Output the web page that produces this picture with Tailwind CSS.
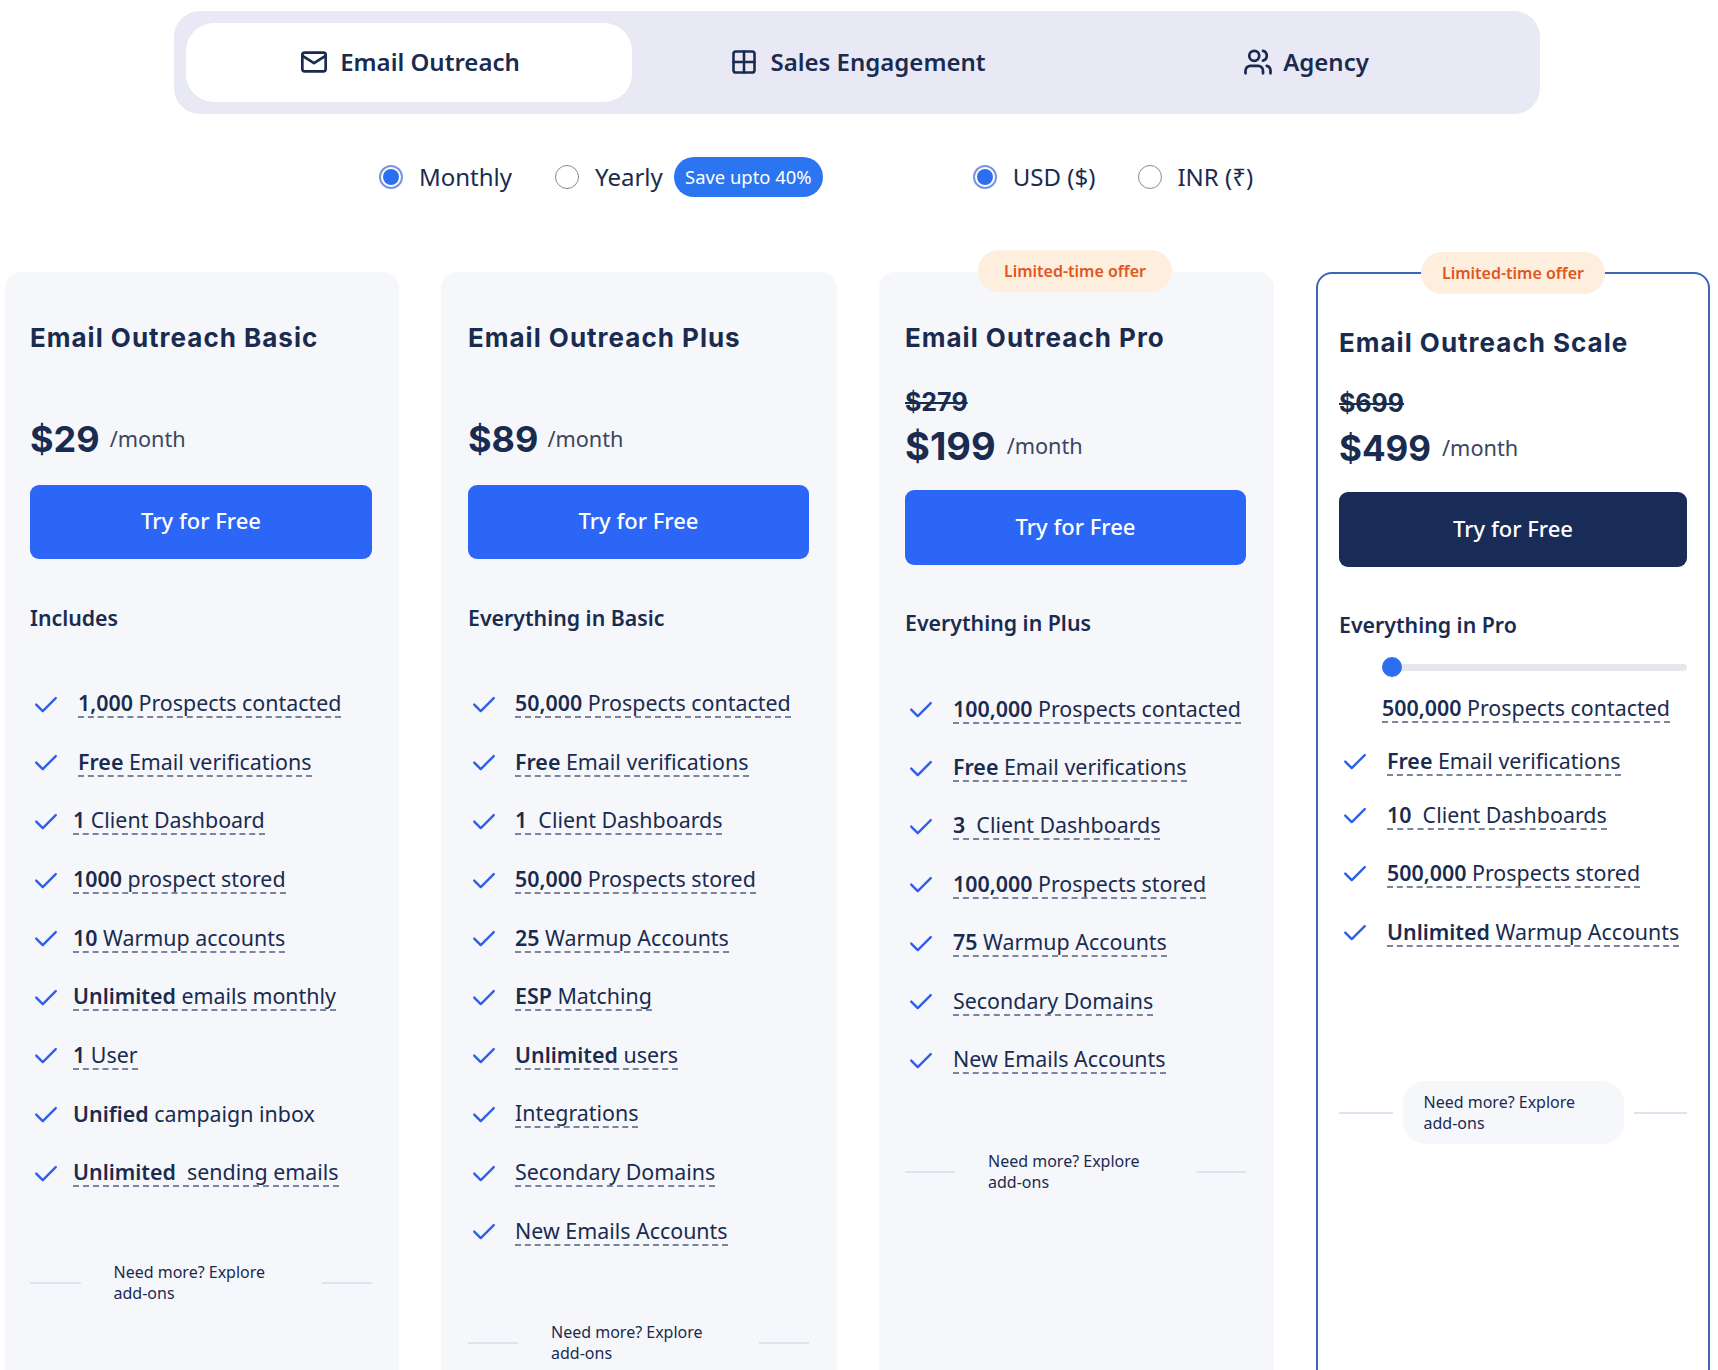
<!DOCTYPE html>
<html lang="en">
<head>
  <meta charset="UTF-8">
  <title>Pricing</title>
  <meta name="viewport" content="width=device-width, initial-scale=1.0">
  <script src="https://cdn.jsdelivr.net/npm/@tailwindcss/browser@4"></script>
</head>
<body class="bg-white text-[#1a2b50] font-['Noto_Sans',sans-serif] h-[1370px] overflow-hidden">

  <!-- PRODUCT TABS -->
  <div class="ml-[174px] mt-[11px] w-[1366px] h-[103px] p-3 rounded-[26px] bg-[#e8e9f5] flex">
    <div class="flex-1 h-[79px] pb-[2px] pl-[2px] rounded-[28px] bg-white flex items-center justify-center gap-[12px] text-[24px] font-semibold">
      <svg class="w-[28px] h-[28px]" viewBox="0 0 24 24" fill="none" stroke="currentColor" stroke-width="2.3" stroke-linecap="round" stroke-linejoin="round"><rect x="2" y="4" width="20" height="16" rx="2"/><path d="M2.5 7 12 13l9.5-6"/></svg>
      <span>Email Outreach</span>
    </div>
    <div class="flex-1 h-[79px] pb-[2px] pl-[4px] flex items-center justify-center gap-[12px] text-[24px] font-semibold">
      <svg class="w-[28px] h-[28px]" viewBox="0 0 24 24" fill="none" stroke="currentColor" stroke-width="2.2" stroke-linecap="round" stroke-linejoin="round"><rect x="3" y="3" width="18" height="18" rx="2"/><path d="M12 3v18M3 12h18"/></svg>
      <span>Sales Engagement</span>
    </div>
    <div class="flex-1 h-[79px] pb-[2px] pl-[4px] flex items-center justify-center gap-[10px] text-[24px] font-semibold">
      <svg class="w-[30px] h-[30px]" viewBox="0 0 24 24" fill="none" stroke="currentColor" stroke-width="2.2" stroke-linecap="round" stroke-linejoin="round"><path d="M16 21v-2a4 4 0 0 0-4-4H6a4 4 0 0 0-4 4v2"/><circle cx="9" cy="7" r="4"/><path d="M22 21v-2a4 4 0 0 0-3-3.87"/><path d="M16 3.13a4 4 0 0 1 0 7.75"/></svg>
      <span>Agency</span>
    </div>
  </div>

  <!-- BILLING / CURRENCY -->
  <div class="mt-[43px] ml-[379px] h-[40px] flex items-center text-[24px]">
    <span class="w-6 h-6 rounded-full border-2 border-[#7d93dd] flex items-center justify-center"><span class="w-4 h-4 rounded-full bg-[#2b6ff0]"></span></span>
    <span class="ml-[16px]">Monthly</span>
    <span class="ml-[43px] w-6 h-6 rounded-full border-[1.5px] border-[#8a8a8a] bg-white"></span>
    <span class="ml-[16px]">Yearly</span>
    <span class="ml-[11px] w-[149px] h-[40px] pb-[1px] rounded-full bg-[#2b76f0] text-white text-[18.4px] flex items-center justify-center">Save upto 40%</span>
    <span class="ml-[150px] w-6 h-6 rounded-full border-2 border-[#7d93dd] flex items-center justify-center"><span class="w-4 h-4 rounded-full bg-[#2b6ff0]"></span></span>
    <span class="ml-[16px]">USD ($)</span>
    <span class="ml-[43px] w-6 h-6 rounded-full border-[1.5px] border-[#8a8a8a] bg-white"></span>
    <span class="ml-[15px]">INR (₹)</span>
  </div>

  <!-- PLANS -->
  <div class="mt-[75px] pl-[5px] grid grid-cols-[394px_396px_395px_394px] gap-x-[42px] items-start">

    <!-- Basic -->
    <div class="relative h-[1200px] rounded-[16px] bg-[#f6f7fb] pt-[48px] pl-[25px] pr-[27px]">
      <h2 class="h-[36px] leading-[36px] text-[26px] font-bold tracking-[1px] font-['Inter',sans-serif]">Email Outreach Basic</h2>
      <div class="mt-[59px] h-[48px] flex items-center">
        <span class="text-[36px] font-bold font-['Inter',sans-serif]">$29</span>
        <span class="ml-[10px] text-[21.7px] text-[#3a4660]">/month</span>
      </div>
      <button class="mt-[22px] w-full h-[74px] pb-[3px] rounded-[9px] bg-[#2b66f6] text-white text-[22px] font-medium">Try for Free</button>
      <p class="mt-[44px] h-[30px] leading-[30px] text-[21.3px] font-semibold">Includes</p>
      <ul class="mt-[41.5px] text-[21.4px]">
        <li class="h-[58.6px] flex items-center"><svg class="ml-[3px] w-[26px] h-[26px] text-[#2f5fe8]" viewBox="0 0 24 24" fill="none" stroke="currentColor" stroke-width="2.2" stroke-linecap="round" stroke-linejoin="round"><path d="M3 12.5l6 6L21 6.5"/></svg><span class="ml-[19px] border-b-2 border-dashed border-[#7a849c] leading-[27px]"><b class="font-semibold">1,000 </b>Prospects contacted</span></li>
        <li class="h-[58.6px] flex items-center"><svg class="ml-[3px] w-[26px] h-[26px] text-[#2f5fe8]" viewBox="0 0 24 24" fill="none" stroke="currentColor" stroke-width="2.2" stroke-linecap="round" stroke-linejoin="round"><path d="M3 12.5l6 6L21 6.5"/></svg><span class="ml-[19px] border-b-2 border-dashed border-[#7a849c] leading-[27px]"><b class="font-semibold">Free </b>Email verifications</span></li>
        <li class="h-[58.6px] flex items-center"><svg class="ml-[3px] w-[26px] h-[26px] text-[#2f5fe8]" viewBox="0 0 24 24" fill="none" stroke="currentColor" stroke-width="2.2" stroke-linecap="round" stroke-linejoin="round"><path d="M3 12.5l6 6L21 6.5"/></svg><span class="ml-[14px] border-b-2 border-dashed border-[#7a849c] leading-[27px]"><b class="font-semibold">1 </b>Client Dashboard</span></li>
        <li class="h-[58.6px] flex items-center"><svg class="ml-[3px] w-[26px] h-[26px] text-[#2f5fe8]" viewBox="0 0 24 24" fill="none" stroke="currentColor" stroke-width="2.2" stroke-linecap="round" stroke-linejoin="round"><path d="M3 12.5l6 6L21 6.5"/></svg><span class="ml-[14px] border-b-2 border-dashed border-[#7a849c] leading-[27px]"><b class="font-semibold">1000 </b>prospect stored</span></li>
        <li class="h-[58.6px] flex items-center"><svg class="ml-[3px] w-[26px] h-[26px] text-[#2f5fe8]" viewBox="0 0 24 24" fill="none" stroke="currentColor" stroke-width="2.2" stroke-linecap="round" stroke-linejoin="round"><path d="M3 12.5l6 6L21 6.5"/></svg><span class="ml-[14px] border-b-2 border-dashed border-[#7a849c] leading-[27px]"><b class="font-semibold">10 </b>Warmup accounts</span></li>
        <li class="h-[58.6px] flex items-center"><svg class="ml-[3px] w-[26px] h-[26px] text-[#2f5fe8]" viewBox="0 0 24 24" fill="none" stroke="currentColor" stroke-width="2.2" stroke-linecap="round" stroke-linejoin="round"><path d="M3 12.5l6 6L21 6.5"/></svg><span class="ml-[14px] border-b-2 border-dashed border-[#7a849c] leading-[27px]"><b class="font-semibold">Unlimited </b>emails monthly</span></li>
        <li class="h-[58.6px] flex items-center"><svg class="ml-[3px] w-[26px] h-[26px] text-[#2f5fe8]" viewBox="0 0 24 24" fill="none" stroke="currentColor" stroke-width="2.2" stroke-linecap="round" stroke-linejoin="round"><path d="M3 12.5l6 6L21 6.5"/></svg><span class="ml-[14px] border-b-2 border-dashed border-[#7a849c] leading-[27px]"><b class="font-semibold">1 </b>User</span></li>
        <li class="h-[58.6px] flex items-center"><svg class="ml-[3px] w-[26px] h-[26px] text-[#2f5fe8]" viewBox="0 0 24 24" fill="none" stroke="currentColor" stroke-width="2.2" stroke-linecap="round" stroke-linejoin="round"><path d="M3 12.5l6 6L21 6.5"/></svg><span class="ml-[14px] leading-[27px]"><b class="font-semibold">Unified </b>campaign inbox</span></li>
        <li class="h-[58.6px] flex items-center"><svg class="ml-[3px] w-[26px] h-[26px] text-[#2f5fe8]" viewBox="0 0 24 24" fill="none" stroke="currentColor" stroke-width="2.2" stroke-linecap="round" stroke-linejoin="round"><path d="M3 12.5l6 6L21 6.5"/></svg><span class="ml-[14px] border-b-2 border-dashed border-[#7a849c] leading-[27px] whitespace-pre"><b class="font-semibold">Unlimited </b> sending emails</span></li>
      </ul>
      <div class="mt-[50px] flex items-center">
        <span class="flex-1 h-[2px] bg-[#e0e2f0]"></span>
        <span class="mx-[10px] w-[221px] h-[63px] px-[23px] flex items-center text-[16px] leading-[21px]">Need more? Explore add-ons</span>
        <span class="flex-1 h-[2px] bg-[#e0e2f0]"></span>
      </div>
    </div>

    <!-- Plus -->
    <div class="relative h-[1200px] rounded-[16px] bg-[#f6f7fb] pt-[48px] pl-[27px] pr-[28px]">
      <h2 class="h-[36px] leading-[36px] text-[26px] font-bold tracking-[1px] font-['Inter',sans-serif]">Email Outreach Plus</h2>
      <div class="mt-[59px] h-[48px] flex items-center">
        <span class="text-[36px] font-bold font-['Inter',sans-serif]">$89</span>
        <span class="ml-[9px] text-[21.7px] text-[#3a4660]">/month</span>
      </div>
      <button class="mt-[22px] w-full h-[74px] pb-[3px] rounded-[9px] bg-[#2b66f6] text-white text-[22px] font-medium">Try for Free</button>
      <p class="mt-[44px] h-[30px] leading-[30px] text-[21.3px] font-semibold">Everything in Basic</p>
      <ul class="mt-[41.5px] text-[21.4px]">
        <li class="h-[58.6px] flex items-center"><svg class="ml-[3px] w-[26px] h-[26px] text-[#2f5fe8]" viewBox="0 0 24 24" fill="none" stroke="currentColor" stroke-width="2.2" stroke-linecap="round" stroke-linejoin="round"><path d="M3 12.5l6 6L21 6.5"/></svg><span class="ml-[18px] border-b-2 border-dashed border-[#7a849c] leading-[27px]"><b class="font-semibold">50,000 </b>Prospects contacted</span></li>
        <li class="h-[58.6px] flex items-center"><svg class="ml-[3px] w-[26px] h-[26px] text-[#2f5fe8]" viewBox="0 0 24 24" fill="none" stroke="currentColor" stroke-width="2.2" stroke-linecap="round" stroke-linejoin="round"><path d="M3 12.5l6 6L21 6.5"/></svg><span class="ml-[18px] border-b-2 border-dashed border-[#7a849c] leading-[27px]"><b class="font-semibold">Free </b>Email verifications</span></li>
        <li class="h-[58.6px] flex items-center"><svg class="ml-[3px] w-[26px] h-[26px] text-[#2f5fe8]" viewBox="0 0 24 24" fill="none" stroke="currentColor" stroke-width="2.2" stroke-linecap="round" stroke-linejoin="round"><path d="M3 12.5l6 6L21 6.5"/></svg><span class="ml-[18px] border-b-2 border-dashed border-[#7a849c] leading-[27px] whitespace-pre"><b class="font-semibold">1 </b> Client Dashboards</span></li>
        <li class="h-[58.6px] flex items-center"><svg class="ml-[3px] w-[26px] h-[26px] text-[#2f5fe8]" viewBox="0 0 24 24" fill="none" stroke="currentColor" stroke-width="2.2" stroke-linecap="round" stroke-linejoin="round"><path d="M3 12.5l6 6L21 6.5"/></svg><span class="ml-[18px] border-b-2 border-dashed border-[#7a849c] leading-[27px]"><b class="font-semibold">50,000 </b>Prospects stored</span></li>
        <li class="h-[58.6px] flex items-center"><svg class="ml-[3px] w-[26px] h-[26px] text-[#2f5fe8]" viewBox="0 0 24 24" fill="none" stroke="currentColor" stroke-width="2.2" stroke-linecap="round" stroke-linejoin="round"><path d="M3 12.5l6 6L21 6.5"/></svg><span class="ml-[18px] border-b-2 border-dashed border-[#7a849c] leading-[27px]"><b class="font-semibold">25 </b>Warmup Accounts</span></li>
        <li class="h-[58.6px] flex items-center"><svg class="ml-[3px] w-[26px] h-[26px] text-[#2f5fe8]" viewBox="0 0 24 24" fill="none" stroke="currentColor" stroke-width="2.2" stroke-linecap="round" stroke-linejoin="round"><path d="M3 12.5l6 6L21 6.5"/></svg><span class="ml-[18px] border-b-2 border-dashed border-[#7a849c] leading-[27px]"><b class="font-semibold">ESP </b>Matching</span></li>
        <li class="h-[58.6px] flex items-center"><svg class="ml-[3px] w-[26px] h-[26px] text-[#2f5fe8]" viewBox="0 0 24 24" fill="none" stroke="currentColor" stroke-width="2.2" stroke-linecap="round" stroke-linejoin="round"><path d="M3 12.5l6 6L21 6.5"/></svg><span class="ml-[18px] border-b-2 border-dashed border-[#7a849c] leading-[27px]"><b class="font-semibold">Unlimited </b>users</span></li>
        <li class="h-[58.6px] flex items-center"><svg class="ml-[3px] w-[26px] h-[26px] text-[#2f5fe8]" viewBox="0 0 24 24" fill="none" stroke="currentColor" stroke-width="2.2" stroke-linecap="round" stroke-linejoin="round"><path d="M3 12.5l6 6L21 6.5"/></svg><span class="ml-[18px] border-b-2 border-dashed border-[#7a849c] leading-[27px]">Integrations</span></li>
        <li class="h-[58.6px] flex items-center"><svg class="ml-[3px] w-[26px] h-[26px] text-[#2f5fe8]" viewBox="0 0 24 24" fill="none" stroke="currentColor" stroke-width="2.2" stroke-linecap="round" stroke-linejoin="round"><path d="M3 12.5l6 6L21 6.5"/></svg><span class="ml-[18px] border-b-2 border-dashed border-[#7a849c] leading-[27px]">Secondary Domains</span></li>
        <li class="h-[58.6px] flex items-center"><svg class="ml-[3px] w-[26px] h-[26px] text-[#2f5fe8]" viewBox="0 0 24 24" fill="none" stroke="currentColor" stroke-width="2.2" stroke-linecap="round" stroke-linejoin="round"><path d="M3 12.5l6 6L21 6.5"/></svg><span class="ml-[18px] border-b-2 border-dashed border-[#7a849c] leading-[27px]">New Emails Accounts</span></li>
      </ul>
      <div class="mt-[51.5px] flex items-center">
        <span class="flex-1 h-[2px] bg-[#e0e2f0]"></span>
        <span class="mx-[10px] w-[221px] h-[63px] px-[23px] flex items-center text-[16px] leading-[21px]">Need more? Explore add-ons</span>
        <span class="flex-1 h-[2px] bg-[#e0e2f0]"></span>
      </div>
    </div>

    <!-- Pro -->
    <div class="relative h-[1200px] rounded-[16px] bg-[#f6f7fb] pt-[48px] pl-[26px] pr-[28px]">
      <span class="absolute -top-[22px] left-[99px] w-[194px] h-[42px] rounded-full bg-[#fdeedd] text-[#e0561f] text-[16px] font-semibold flex items-center justify-center">Limited-time offer</span>
      <h2 class="h-[36px] leading-[36px] text-[26px] font-bold tracking-[1px] font-['Inter',sans-serif]">Email Outreach Pro</h2>
      <div class="mt-[32px] h-[28px] leading-[28px] text-[25px] font-bold font-['Inter',sans-serif] line-through">$279</div>
      <div class="mt-[6px] h-[48px] flex items-center">
        <span class="text-[38px] font-bold font-['Inter',sans-serif]">$199</span>
        <span class="ml-[11px] text-[21.7px] text-[#3a4660]">/month</span>
      </div>
      <button class="mt-[20px] w-full h-[75px] pb-[2px] rounded-[9px] bg-[#2b66f6] text-white text-[22px] font-medium">Try for Free</button>
      <p class="mt-[43px] h-[30px] leading-[30px] text-[21.3px] font-semibold">Everything in Plus</p>
      <ul class="mt-[42px] text-[21.4px]">
        <li class="h-[58.4px] flex items-center"><svg class="ml-[3px] w-[26px] h-[26px] text-[#2f5fe8]" viewBox="0 0 24 24" fill="none" stroke="currentColor" stroke-width="2.2" stroke-linecap="round" stroke-linejoin="round"><path d="M3 12.5l6 6L21 6.5"/></svg><span class="ml-[19px] border-b-2 border-dashed border-[#7a849c] leading-[27px]"><b class="font-semibold">100,000 </b>Prospects contacted</span></li>
        <li class="h-[58.4px] flex items-center"><svg class="ml-[3px] w-[26px] h-[26px] text-[#2f5fe8]" viewBox="0 0 24 24" fill="none" stroke="currentColor" stroke-width="2.2" stroke-linecap="round" stroke-linejoin="round"><path d="M3 12.5l6 6L21 6.5"/></svg><span class="ml-[19px] border-b-2 border-dashed border-[#7a849c] leading-[27px]"><b class="font-semibold">Free </b>Email verifications</span></li>
        <li class="h-[58.4px] flex items-center"><svg class="ml-[3px] w-[26px] h-[26px] text-[#2f5fe8]" viewBox="0 0 24 24" fill="none" stroke="currentColor" stroke-width="2.2" stroke-linecap="round" stroke-linejoin="round"><path d="M3 12.5l6 6L21 6.5"/></svg><span class="ml-[19px] border-b-2 border-dashed border-[#7a849c] leading-[27px] whitespace-pre"><b class="font-semibold">3 </b> Client Dashboards</span></li>
        <li class="h-[58.4px] flex items-center"><svg class="ml-[3px] w-[26px] h-[26px] text-[#2f5fe8]" viewBox="0 0 24 24" fill="none" stroke="currentColor" stroke-width="2.2" stroke-linecap="round" stroke-linejoin="round"><path d="M3 12.5l6 6L21 6.5"/></svg><span class="ml-[19px] border-b-2 border-dashed border-[#7a849c] leading-[27px]"><b class="font-semibold">100,000 </b>Prospects stored</span></li>
        <li class="h-[58.4px] flex items-center"><svg class="ml-[3px] w-[26px] h-[26px] text-[#2f5fe8]" viewBox="0 0 24 24" fill="none" stroke="currentColor" stroke-width="2.2" stroke-linecap="round" stroke-linejoin="round"><path d="M3 12.5l6 6L21 6.5"/></svg><span class="ml-[19px] border-b-2 border-dashed border-[#7a849c] leading-[27px]"><b class="font-semibold">75 </b>Warmup Accounts</span></li>
        <li class="h-[58.4px] flex items-center"><svg class="ml-[3px] w-[26px] h-[26px] text-[#2f5fe8]" viewBox="0 0 24 24" fill="none" stroke="currentColor" stroke-width="2.2" stroke-linecap="round" stroke-linejoin="round"><path d="M3 12.5l6 6L21 6.5"/></svg><span class="ml-[19px] border-b-2 border-dashed border-[#7a849c] leading-[27px]">Secondary Domains</span></li>
        <li class="h-[58.4px] flex items-center"><svg class="ml-[3px] w-[26px] h-[26px] text-[#2f5fe8]" viewBox="0 0 24 24" fill="none" stroke="currentColor" stroke-width="2.2" stroke-linecap="round" stroke-linejoin="round"><path d="M3 12.5l6 6L21 6.5"/></svg><span class="ml-[19px] border-b-2 border-dashed border-[#7a849c] leading-[27px]">New Emails Accounts</span></li>
      </ul>
      <div class="mt-[52px] flex items-center">
        <span class="flex-1 h-[2px] bg-[#e0e2f0]"></span>
        <span class="mx-[10px] w-[221px] h-[63px] px-[23px] flex items-center text-[16px] leading-[21px]">Need more? Explore add-ons</span>
        <span class="flex-1 h-[2px] bg-[#e0e2f0]"></span>
      </div>
    </div>

    <!-- Scale -->
    <div class="relative h-[1200px] rounded-[16px] border-2 border-[#3e64b8] bg-white pt-[51px] pl-[21px] pr-[21px]">
      <span class="absolute -top-[22px] left-[103px] w-[184px] h-[42px] rounded-full bg-[#fdeedd] text-[#e0561f] text-[16px] font-semibold flex items-center justify-center">Limited-time offer</span>
      <h2 class="h-[36px] leading-[36px] text-[26px] font-bold tracking-[1px] font-['Inter',sans-serif]">Email Outreach Scale</h2>
      <div class="mt-[28px] h-[28px] leading-[28px] text-[25px] font-bold font-['Inter',sans-serif] line-through">$699</div>
      <div class="mt-[7px] h-[48px] flex items-center">
        <span class="text-[35px] font-bold font-['Inter',sans-serif]">$499</span>
        <span class="ml-[11px] text-[21.7px] text-[#3a4660]">/month</span>
      </div>
      <button class="mt-[20px] w-full h-[75px] pb-[2px] rounded-[9px] bg-[#182c57] text-white text-[22px] font-medium">Try for Free</button>
      <p class="mt-[43px] h-[30px] leading-[30px] text-[21.3px] font-semibold">Everything in Pro</p>
      <div class="mt-[17px] ml-[43px] h-[20px] relative flex items-center">
        <span class="w-full h-[7px] rounded-full bg-[#e6e7ee]"></span>
        <span class="absolute left-0 w-[20px] h-[20px] rounded-full bg-[#2b6ff0]"></span>
      </div>
      <div class="mt-[2px] ml-[43px] h-[58px] flex items-center text-[21.4px]"><span class="border-b-2 border-dashed border-[#7a849c] leading-[27px]"><b class="font-semibold">500,000 </b>Prospects contacted</span></div>
      <ul class="text-[21.4px]">
        <li class="h-[48px] flex items-center"><svg class="ml-[3px] w-[26px] h-[26px] text-[#2f5fe8]" viewBox="0 0 24 24" fill="none" stroke="currentColor" stroke-width="2.2" stroke-linecap="round" stroke-linejoin="round"><path d="M3 12.5l6 6L21 6.5"/></svg><span class="ml-[19px] border-b-2 border-dashed border-[#7a849c] leading-[27px]"><b class="font-semibold">Free </b>Email verifications</span></li>
        <li class="h-[60px] flex items-center"><svg class="ml-[3px] w-[26px] h-[26px] text-[#2f5fe8]" viewBox="0 0 24 24" fill="none" stroke="currentColor" stroke-width="2.2" stroke-linecap="round" stroke-linejoin="round"><path d="M3 12.5l6 6L21 6.5"/></svg><span class="ml-[19px] border-b-2 border-dashed border-[#7a849c] leading-[27px] whitespace-pre"><b class="font-semibold">10 </b> Client Dashboards</span></li>
        <li class="h-[56px] flex items-center"><svg class="ml-[3px] w-[26px] h-[26px] text-[#2f5fe8]" viewBox="0 0 24 24" fill="none" stroke="currentColor" stroke-width="2.2" stroke-linecap="round" stroke-linejoin="round"><path d="M3 12.5l6 6L21 6.5"/></svg><span class="ml-[19px] border-b-2 border-dashed border-[#7a849c] leading-[27px]"><b class="font-semibold">500,000 </b>Prospects stored</span></li>
        <li class="h-[62px] flex items-center"><svg class="ml-[3px] w-[26px] h-[26px] text-[#2f5fe8]" viewBox="0 0 24 24" fill="none" stroke="currentColor" stroke-width="2.2" stroke-linecap="round" stroke-linejoin="round"><path d="M3 12.5l6 6L21 6.5"/></svg><span class="ml-[19px] border-b-2 border-dashed border-[#7a849c] leading-[27px]"><b class="font-semibold">Unlimited </b>Warmup Accounts</span></li>
      </ul>
      <div class="mt-[118px] flex items-center">
        <span class="flex-1 h-[2px] bg-[#e0e2f0]"></span>
        <span class="mx-[10px] w-[221px] h-[63px] px-[21px] rounded-[22px] bg-[#f6f7fb] flex items-center text-[16px] leading-[21px]">Need more? Explore add-ons</span>
        <span class="flex-1 h-[2px] bg-[#e0e2f0]"></span>
      </div>
    </div>

  </div>
</body>
</html>
